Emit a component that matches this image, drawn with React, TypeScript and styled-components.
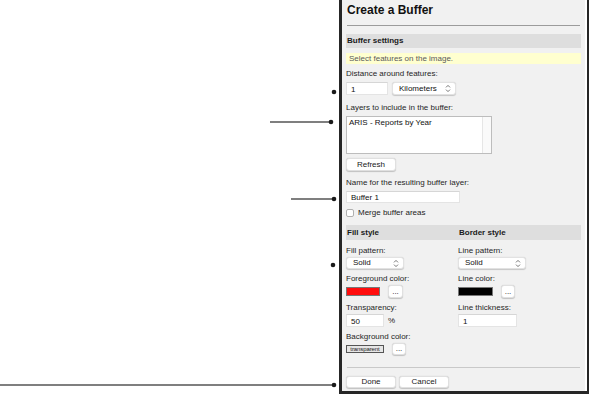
import * as React from "react";
import styled, { createGlobalStyle } from "styled-components";

const GlobalStyle = createGlobalStyle`
  html, body {
    margin: 0;
    padding: 0;
    background: #ffffff;
  }
  body {
    font-family: "Liberation Sans", Arial, Helvetica, sans-serif;
  }
  * {
    box-sizing: border-box;
  }
`;

const Page = styled.div`
  display: flex;
  width: 589px;
  height: 394px;
  overflow: hidden;
`;

const Callouts = styled.svg`
  flex: none;
  display: block;
`;

const Panel = styled.div`
  flex: none;
  display: flex;
  flex-direction: column;
  width: 250px;
  height: 394px;
  padding: 0 6px 0 4px;
  background: #f1f1f1;
  border-left: 3px solid #262626;
  border-right: 2px solid #262626;
  border-bottom: 3px solid #262626;
  box-shadow: inset -2px 0 0 #ffffff;
  color: #222;
  font-size: 8px;
  line-height: 10px;
`;

const Title = styled.h1`
  margin: 0;
  padding: 3px 0 0 1px;
  font-size: 12px;
  line-height: 14px;
  font-weight: bold;
  color: #111;
`;

const Rule = styled.div<{ $top: number; $color?: string }>`
  height: 1px;
  margin: ${(p) => p.$top}px 1px 0 1px;
  background: ${(p) => p.$color || "#9c9c9c"};
`;

const Band = styled.div<{ $top: number; $height: number }>`
  display: grid;
  grid-template-columns: 112px 1fr;
  margin-top: ${(p) => p.$top}px;
  height: ${(p) => p.$height}px;
  line-height: ${(p) => p.$height}px;
  padding-left: 1px;
  background: #dedede;
  font-weight: bold;
  color: #1a1a1a;
`;

const Notice = styled.div`
  margin-top: 5px;
  height: 11px;
  line-height: 11px;
  padding-left: 3px;
  background: #ffffcf;
  color: #5a5a5a;
`;

const Label = styled.div<{ $top: number }>`
  margin-top: ${(p) => p.$top}px;
  height: 10px;
  white-space: nowrap;
  color: #262626;
`;

const Row = styled.div<{ $top: number; $gap?: number }>`
  display: flex;
  align-items: center;
  gap: ${(p) => p.$gap ?? 4}px;
  margin-top: ${(p) => p.$top}px;
`;

const TextInput = styled.div<{ $w: number; $h?: number }>`
  width: ${(p) => p.$w}px;
  height: ${(p) => p.$h ?? 13}px;
  line-height: ${(p) => p.$h ?? 13}px;
  padding-left: 4px;
  background: #ffffff;
  border: 1px solid #e4e4e4;
  border-top-color: #d6d6d6;
  color: #111;
`;

const SelectBox = styled.div<{ $w: number; $h?: number }>`
  display: flex;
  align-items: center;
  justify-content: space-between;
  width: ${(p) => p.$w}px;
  height: ${(p) => p.$h ?? 13}px;
  padding: 0 4px 0 6px;
  background: #ffffff;
  border-radius: 3px;
  border: 1px solid #e2e2e2;
  box-shadow: 0 0.5px 1px rgba(0, 0, 0, 0.18);
  color: #111;
`;

const Button = styled.div<{ $w: number; $h?: number }>`
  display: flex;
  align-items: center;
  justify-content: center;
  width: ${(p) => p.$w}px;
  height: ${(p) => p.$h ?? 13}px;
  background: #ffffff;
  border-radius: 3px;
  border: 1px solid #e0e0e0;
  box-shadow: 0 0.5px 1px rgba(0, 0, 0, 0.2);
  color: #1a1a1a;
`;

const ListBox = styled.div`
  display: flex;
  margin-top: 3px;
  width: 146px;
  height: 38px;
  background: #ffffff;
  border: 1px solid #bdbdbd;
`;

const ListItems = styled.div`
  flex: 1;
  padding: 1px 0 0 2px;
  color: #111;
`;

const ScrollTrack = styled.div`
  width: 9px;
  border-left: 1px solid #e6e6e6;
  background: #fafafa;
`;

const CheckBox = styled.div`
  width: 8px;
  height: 8px;
  border: 1px solid #b0b0b0;
  border-radius: 2px;
  background: #ffffff;
`;

const Columns = styled.div`
  display: grid;
  grid-template-columns: 112px 1fr;
`;

const Column = styled.div`
  display: flex;
  flex-direction: column;
`;

const Swatch = styled.div<{ $color: string; $w: number }>`
  width: ${(p) => p.$w}px;
  height: 9px;
  background: ${(p) => p.$color};
  border: 1px solid #777;
`;

const TransparentTag = styled.div`
  width: 38px;
  height: 8px;
  line-height: 6px;
  border: 1px solid #555;
  background: #e6e6e6;
  font-size: 6px;
  letter-spacing: -0.1px;
  text-align: center;
  color: #222;
  overflow: hidden;
  white-space: nowrap;
`;

const Unit = styled.span`
  color: #222;
`;

const Arrows: React.FC = () => (
  <svg width="6" height="9" viewBox="0 0 6 9">
    <path d="M1 3.4 L3 1.4 L5 3.4" fill="none" stroke="#666" strokeWidth="0.9" />
    <path d="M1 5.6 L3 7.6 L5 5.6" fill="none" stroke="#666" strokeWidth="0.9" />
  </svg>
);

const Select: React.FC<{ w: number; h?: number; value: string }> = ({ w, h, value }) => (
  <SelectBox $w={w} $h={h}>
    <span>{value}</span>
    <Arrows />
  </SelectBox>
);

// callout lines pointing at the panel
const calloutLines = [
  { x1: 270, y: 122, dot: 331 },
  { x1: 291, y: 199, dot: 334 },
  { x1: 0, y: 385, dot: 334 },
];
const calloutDots = [
  { x: 334, y: 92 },
  { x: 333, y: 265 },
];

export default function App() {
  return (
    <>
      <GlobalStyle />
      <Page>
        <Callouts width="339" height="394" viewBox="0 0 339 394">
          {calloutLines.map((l) => (
            <g key={l.y}>
              <line x1={l.x1} y1={l.y} x2={l.dot} y2={l.y} stroke="#555" strokeWidth="1.3" />
              <circle cx={l.dot} cy={l.y} r="2.3" fill="#1a1a1a" />
            </g>
          ))}
          {calloutDots.map((d) => (
            <circle key={d.y} cx={d.x} cy={d.y} r="2.3" fill="#1a1a1a" />
          ))}
        </Callouts>

        <Panel>
          <Title>Create a Buffer</Title>
          <Rule $top={8} />

          <Band $top={8} $height={14}>
            <span>Buffer settings</span>
          </Band>
          <Notice>Select features on the image.</Notice>

          <Label $top={5}>Distance around features:</Label>
          <Row $top={3} $gap={4}>
            <TextInput $w={42}>1</TextInput>
            <Select w={64} value="Kilometers" />
          </Row>

          <Label $top={8}>Layers to include in the buffer:</Label>
          <ListBox>
            <ListItems>ARIS - Reports by Year</ListItems>
            <ScrollTrack />
          </ListBox>
          <Row $top={4}>
            <Button $w={50}>Refresh</Button>
          </Row>

          <Label $top={7}>Name for the resulting buffer layer:</Label>
          <Row $top={3}>
            <TextInput $w={114} $h={12}>Buffer 1</TextInput>
          </Row>
          <Row $top={5} $gap={4}>
            <CheckBox />
            <span>Merge buffer areas</span>
          </Row>

          <Band $top={7} $height={15}>
            <span>Fill style</span>
            <span>Border style</span>
          </Band>

          <Columns>
            <Column>
              <Label $top={6}>Fill pattern:</Label>
              <Row $top={1}>
                <Select w={58} h={12} value="Solid" />
              </Row>
              <Label $top={5}>Foreground color:</Label>
              <Row $top={1} $gap={8}>
                <Swatch $color="#ff0d0d" $w={34} />
                <Button $w={15}>...</Button>
              </Row>
              <Label $top={5}>Transparency:</Label>
              <Row $top={1} $gap={4}>
                <TextInput $w={38}>50</TextInput>
                <Unit>%</Unit>
              </Row>
              <Label $top={5}>Background color:</Label>
              <Row $top={1} $gap={8}>
                <TransparentTag>transparent</TransparentTag>
                <Button $w={14} $h={12}>...</Button>
              </Row>
            </Column>
            <Column>
              <Label $top={6}>Line pattern:</Label>
              <Row $top={1}>
                <Select w={68} h={12} value="Solid" />
              </Row>
              <Label $top={5}>Line color:</Label>
              <Row $top={1} $gap={8}>
                <Swatch $color="#000000" $w={35} />
                <Button $w={14}>...</Button>
              </Row>
              <Label $top={5}>Line thickness:</Label>
              <Row $top={1}>
                <TextInput $w={59}>1</TextInput>
              </Row>
            </Column>
          </Columns>

          <Rule $top={12} $color="#c9c9c9" />
          <Row $top={8} $gap={3}>
            <Button $w={50} $h={12}>Done</Button>
            <Button $w={50} $h={12}>Cancel</Button>
          </Row>
        </Panel>
      </Page>
    </>
  );
}
